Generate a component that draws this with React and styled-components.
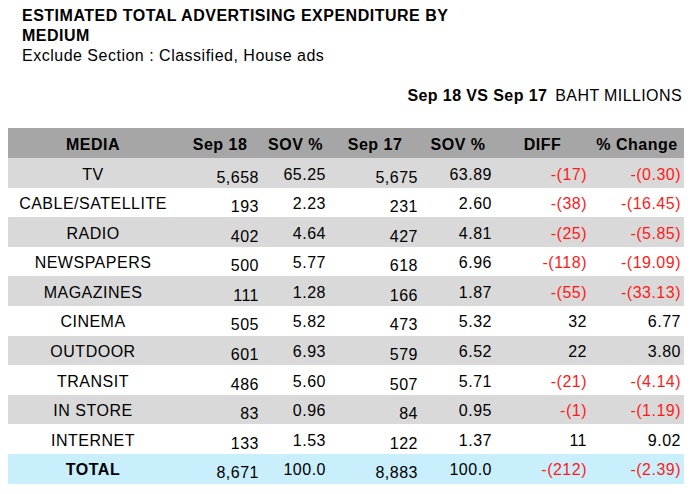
import React from "react";
import styled, { createGlobalStyle } from "styled-components";

const Global = createGlobalStyle`
  html, body { margin: 0; padding: 0; background: #fff; }
  body { font-family: "Liberation Sans", Arial, sans-serif; color: #000; }
`;

const Page = styled.div`
  width: 700px;
  height: 494px;
  overflow: hidden;
  padding-top: 6px;
  box-sizing: border-box;
`;

const Heading = styled.div`
  padding-left: 22px;
  font-size: 16px;
  line-height: 20px;
  letter-spacing: 0.5px;
`;

const Title = styled.div`
  font-weight: bold;
  width: 450px;
`;

const Sub = styled.div`
  font-weight: normal;
`;

const Unit = styled.div`
  margin-top: 19.5px;
  padding-right: 18px;
  text-align: right;
  font-size: 16px;
  line-height: 20px;
  letter-spacing: 0.4px;
  b { font-weight: bold; margin-right: 8px; }
`;

const Table = styled.div`
  margin: 22.5px 0 0 8px;
  width: 676px;
`;

const Row = styled.div`
  display: grid;
  grid-template-columns: 170px 84px 67px 92px 74px 95px 94px;
  height: ${(p) => (p.$head ? "30px" : "29.6px")};
  background: ${(p) => p.$bg};
  font-weight: ${(p) => (p.$head ? "bold" : "normal")};
`;

const Cell = styled.div`
  font-size: 16px;
  line-height: 20px;
  letter-spacing: 0.5px;
  white-space: nowrap;
  text-align: ${(p) => p.$align || "right"};
  padding-right: ${(p) => (p.$align === "center" ? "0" : "3px")};
  padding-top: ${(p) => (p.$low ? "9.5px" : "6.5px")};
  color: ${(p) => (p.$neg ? "#ff1a1a" : "#000")};
  font-weight: ${(p) => (p.$bold ? "bold" : "inherit")};
`;

const rows = [
  ["TV", "5,658", "65.25", "5,675", "63.89", "-(17)", "-(0.30)"],
  ["CABLE/SATELLITE", "193", "2.23", "231", "2.60", "-(38)", "-(16.45)"],
  ["RADIO", "402", "4.64", "427", "4.81", "-(25)", "-(5.85)"],
  ["NEWSPAPERS", "500", "5.77", "618", "6.96", "-(118)", "-(19.09)"],
  ["MAGAZINES", "111", "1.28", "166", "1.87", "-(55)", "-(33.13)"],
  ["CINEMA", "505", "5.82", "473", "5.32", "32", "6.77"],
  ["OUTDOOR", "601", "6.93", "579", "6.52", "22", "3.80"],
  ["TRANSIT", "486", "5.60", "507", "5.71", "-(21)", "-(4.14)"],
  ["IN STORE", "83", "0.96", "84", "0.95", "-(1)", "-(1.19)"],
  ["INTERNET", "133", "1.53", "122", "1.37", "11", "9.02"],
];

const total = ["TOTAL", "8,671", "100.0", "8,883", "100.0", "-(212)", "-(2.39)"];

const headers = ["MEDIA", "Sep 18", "SOV %", "Sep 17", "SOV %", "DIFF", "% Change"];

function DataRow({ data, bg, bold }) {
  return (
    <Row $bg={bg}>
      {data.map((v, i) => (
        <Cell
          key={i}
          $align={i === 0 ? "center" : "right"}
          $low={i === 1 || i === 3}
          $neg={v.startsWith("-")}
          $bold={bold && i === 0}
        >
          {v}
        </Cell>
      ))}
    </Row>
  );
}

export default function App() {
  return (
    <>
      <Global />
      <Page>
        <Heading>
          <Title>ESTIMATED TOTAL ADVERTISING EXPENDITURE BY MEDIUM</Title>
          <Sub>Exclude Section : Classified, House ads</Sub>
        </Heading>
        <Unit>
          <b>Sep 18 VS Sep 17</b>BAHT MILLIONS
        </Unit>
        <Table>
          <Row $head $bg="#a6a6a6">
            {headers.map((h, i) => (
              <Cell key={i} $align="center">
                {h}
              </Cell>
            ))}
          </Row>
          {rows.map((r, i) => (
            <DataRow key={r[0]} data={r} bg={i % 2 === 0 ? "#d9d9d9" : "#ffffff"} />
          ))}
          <DataRow data={total} bg="#c9eefc" bold />
        </Table>
      </Page>
    </>
  );
}
